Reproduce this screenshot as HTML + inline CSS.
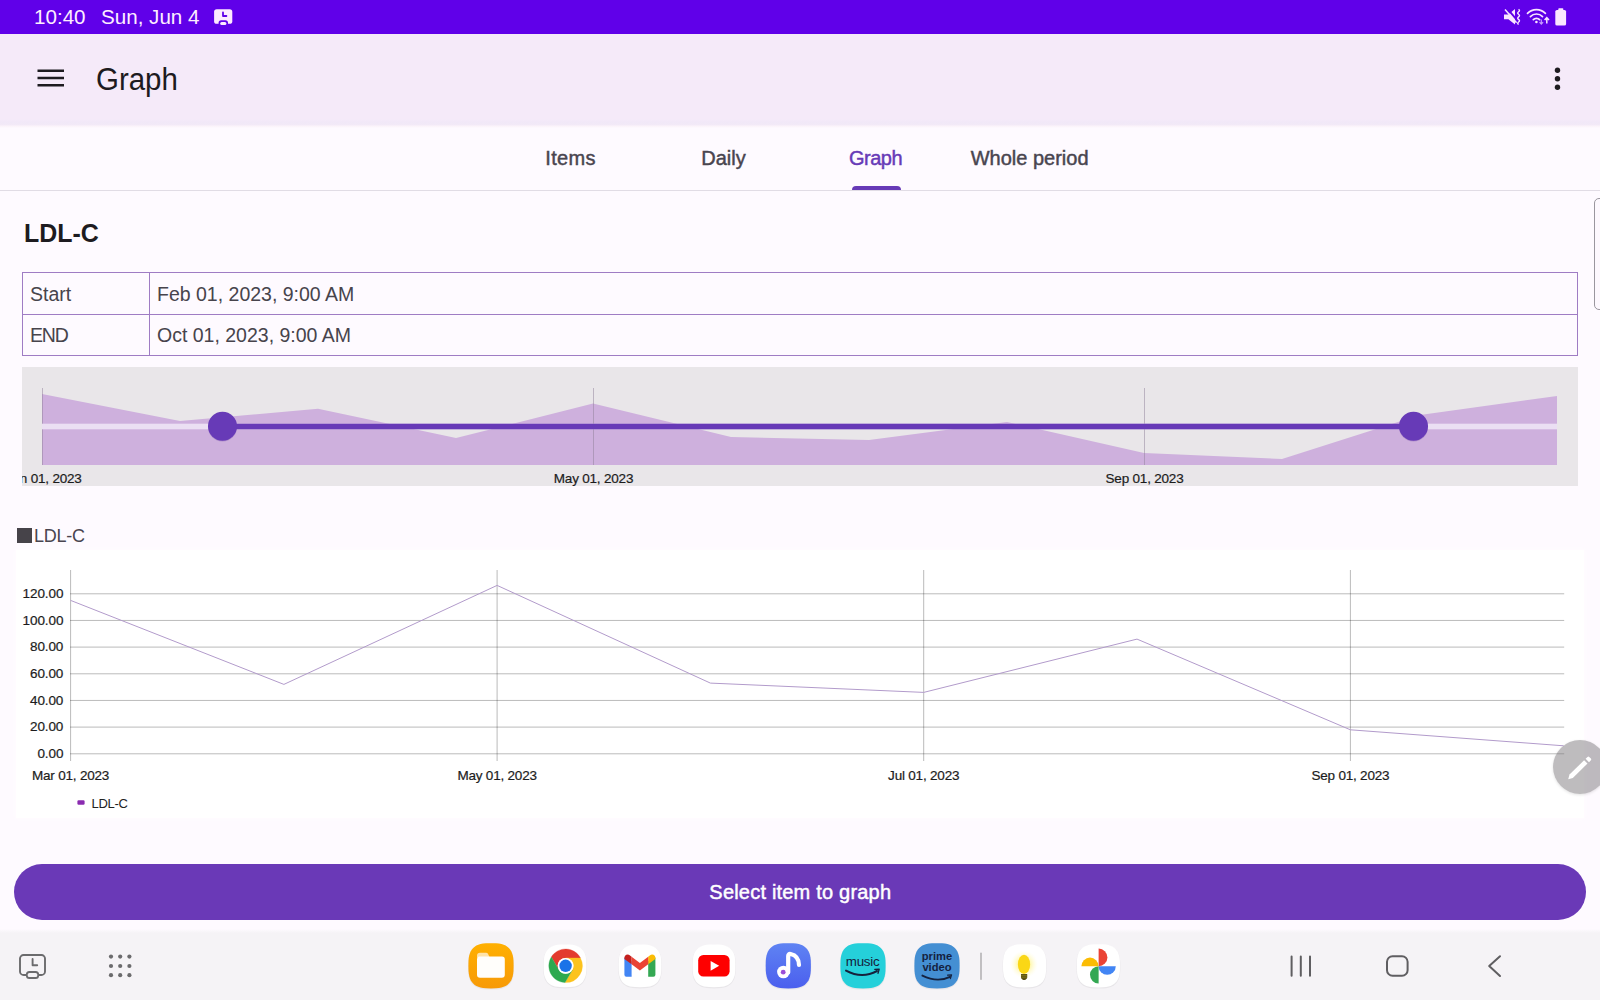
<!DOCTYPE html>
<html lang="en">
<head>
<meta charset="utf-8">
<title>Graph</title>
<style>
*{box-sizing:border-box;margin:0;padding:0}
html,body{width:1600px;height:1000px;overflow:hidden}
body{position:relative;background:#fefaff;font-family:"Liberation Sans","DejaVu Sans",sans-serif;color:#1d1b20}
.abs{position:absolute}
.t{position:absolute;white-space:nowrap;line-height:1}
.med{-webkit-text-stroke:0.45px currentColor}
#status{left:0;top:0;width:1600px;height:33.5px;background:#6000e9}
#appbar{left:0;top:33.5px;width:1600px;height:91.5px;background:#f5eaf9}
#appshadow{left:0;top:119px;width:1600px;height:9px;background:linear-gradient(#f5eaf9,#f1e8f8 35%,#f2e9f7 60%,#fbf3fa 80%,#fefaff)}
#tabline{left:0;top:190px;width:1600px;height:1px;background:#e1dce5}
.tab{font-size:20px;color:#49454f;transform:translateX(-50%);top:148px}
#ind{left:852px;top:186px;width:49px;height:4px;background:#673ab7;border-radius:4px 4px 0 0}
#tbl{left:22px;top:272px;width:1556px;height:84px;border:1px solid #9f7cc4}
#tbl .h{left:0;top:41px;width:1554px;height:1px;background:#9f7cc4}
#tbl .v{left:126px;top:0;width:1px;height:82px;background:#9f7cc4}
.cell{font-size:19.5px;color:#47444c}
#range{left:22px;top:367px;width:1556px;height:119px;background:#e9e6e9;overflow:hidden}
.xl{font-size:13.5px;letter-spacing:-0.2px;color:#1c1c1c;-webkit-text-stroke:0.2px #1c1c1c;transform:translateX(-50%)}
.yl{left:16px;width:47.3px;text-align:right;font-size:13.5px;letter-spacing:-0.1px;color:#1c1c1c;-webkit-text-stroke:0.2px #1c1c1c}
#chart{left:16px;top:550px;width:1568px;height:268px;background:#ffffff;box-shadow:0 0 3px 1px #fffcff}
#btn{left:14.3px;top:863.7px;width:1572px;height:56px;border-radius:28px;background:#6a39b7}
#btn .t{left:0;width:100%;text-align:center;top:18.6px;color:#fff;font-size:20px;letter-spacing:0.2px}
#task{left:0;top:929px;width:1600px;height:71px;background:linear-gradient(#fefaff,#f5f3f6 4px)}
</style>
</head>
<body>
<!-- status bar -->
<div id="status" class="abs">
  <div class="t" style="left:34px;top:6.5px;font-size:20.6px;color:#fdeeff">10:40</div>
  <div class="t" style="left:101px;top:6.5px;font-size:20.6px;color:#fdeeff">Sun, Jun 4</div>
  <svg class="abs" style="left:210px;top:4px" width="28" height="26" viewBox="210 4 28 26">
    <rect x="214.1" y="9.2" width="18.2" height="14.6" rx="2.6" fill="#fdeaff"/>
    <path d="M223 12.4v3.6h3.4" stroke="#6000e9" stroke-width="1.8" fill="none" stroke-linecap="round" stroke-linejoin="round"/>
    <rect x="218.6" y="20.2" width="9.4" height="6" rx="2.6" fill="#6000e9"/>
    <rect x="220.2" y="21.9" width="6.2" height="3" rx="1.5" fill="#fdeaff"/>
  </svg>
  <svg class="abs" style="left:1500px;top:4px" width="72" height="26" viewBox="1500 4 72 26">
    <path d="M1504 14.4h4.4l6.6-5.4v15.6l-6.6-5.4h-4.4z" fill="#fae6ff"/>
    <path d="M1506.6 7.8l9.6 11.4" stroke="#6000e9" stroke-width="2" fill="none"/>
    <path d="M1505 9.4l11.6 13.4" stroke="#fae6ff" stroke-width="1.5" fill="none"/>
    <path d="M1518.6 9.2q1.8 1.3 0 2.55q-1.8 1.3 0 2.55q1.8 1.3 0 2.55q-1.8 1.3 0 2.55q1.8 1.3 0 2.55q-1.8 1.3 0 2.55" stroke="#fae6ff" stroke-width="1.4" fill="none"/>
    <g fill="none" stroke="#fae6ff" stroke-width="1.7" stroke-linecap="round">
      <path d="M1527.5 13.4a12.4 12.4 0 0 1 17.9 0"/>
      <path d="M1530.4 16.6a8.3 8.3 0 0 1 12.1 0"/>
      <path d="M1533.3 19.7a4.3 4.3 0 0 1 6.3 0"/>
    </g>
    <circle cx="1536.4" cy="22" r="1.3" fill="#fae6ff"/>
    <path d="M1541.3 19.4v4.6m-1.8-1.8l1.8 1.9l1.8-1.9" stroke="#c79bff" stroke-width="1.2" fill="none"/>
    <path d="M1546.8 23.4v-5.6m-2.2 2.3l2.2-2.4l2.2 2.4" stroke="#fae6ff" stroke-width="1.5" fill="none"/>
    <rect x="1555.3" y="9.9" width="10.8" height="15.7" rx="1.7" fill="#fae6ff"/>
    <rect x="1558.3" y="8.2" width="5" height="3" rx="0.8" fill="#fae6ff"/>
  </svg>
</div>
<!-- app bar -->
<div id="appbar" class="abs">
  <svg class="abs" style="left:36px;top:34.5px" width="30" height="22" viewBox="0 0 30 22"><path d="M1.5 2.8h26.5M1.5 10.05h26.5M1.5 17.25h26.5" stroke="#1d1b20" stroke-width="2.6" fill="none"/></svg>
  <div class="t" style="left:96px;top:30.2px;font-size:31px;transform:scaleX(0.95);transform-origin:0 0;color:#1d1b20">Graph</div>
  <svg class="abs" style="left:1550px;top:31.5px" width="14" height="28" viewBox="0 0 14 28"><circle cx="7.5" cy="5.25" r="2.7" fill="#1d1b20"/><circle cx="7.5" cy="13.75" r="2.7" fill="#1d1b20"/><circle cx="7.5" cy="22.25" r="2.7" fill="#1d1b20"/></svg>
</div>
<div id="appshadow" class="abs"></div>
<!-- tabs -->
<div id="tabline" class="abs"></div>
<div class="t tab med" style="left:570.5px;letter-spacing:0.3px">Items</div>
<div class="t tab med" style="left:723.5px">Daily</div>
<div class="t tab med" style="left:875.5px;color:#673ab7;letter-spacing:-0.5px">Graph</div>
<div class="t tab med" style="left:1029.6px">Whole period</div>
<div id="ind" class="abs"></div>
<!-- right edge handle -->
<div class="abs" style="left:1593.6px;top:197.6px;width:14px;height:112px;border:1.4px solid #9a969e;border-radius:5px;background:#fdf8fe"></div>

<!-- title -->
<div class="t" style="left:24px;top:219.5px;font-size:26.5px;transform:scaleX(0.94);transform-origin:0 0;font-weight:bold;color:#1d1b20">LDL-C</div>

<!-- table -->
<div id="tbl" class="abs">
  <div class="abs h"></div><div class="abs v"></div>
  <div class="t cell" style="left:7px;top:11.5px">Start</div>
  <div class="t cell" style="left:134px;top:11.5px">Feb 01, 2023, 9:00 AM</div>
  <div class="t cell" style="left:7px;top:52.5px;letter-spacing:-1.2px">END</div>
  <div class="t cell" style="left:134px;top:52.5px">Oct 01, 2023, 9:00 AM</div>
</div>

<!-- range slider -->
<div id="range" class="abs">
  <svg class="abs" style="left:0;top:0" width="1556" height="119" viewBox="22 367 1556 119">
    <polygon points="42,394 180,421 318,408.7 456,438 593,403.5 731,437 869,440 1007,422 1144,453 1282,459 1420,415 1557,396 1557,465 42,465" fill="#ceb0dd"/>
    <path d="M42.5 388v77M593.5 388v77M1144.5 388v77" stroke="#8f7f99" stroke-opacity="0.5" stroke-width="1" fill="none"/>
    <rect x="42" y="423.7" width="1515" height="5.6" fill="#ebdff3"/>
    <rect x="222" y="423.7" width="1191" height="5.6" fill="#673ab7"/>
    <circle cx="222.5" cy="427" r="14.5" fill="#5a3596" opacity="0.25"/>
    <circle cx="1413.5" cy="427" r="14.5" fill="#5a3596" opacity="0.25"/>
    <circle cx="222.5" cy="426.3" r="14.5" fill="#673ab7"/>
    <circle cx="1413.5" cy="426.3" r="14.5" fill="#673ab7"/>
  </svg>
  <div class="t xl" style="left:21.8px;top:105px">Jan 01, 2023</div>
  <div class="t xl" style="left:571.5px;top:105px">May 01, 2023</div>
  <div class="t xl" style="left:1122.5px;top:105px">Sep 01, 2023</div>
</div>

<!-- legend top -->
<div class="abs" style="left:17px;top:528px;width:15px;height:15px;background:#464349"></div>
<div class="t" style="left:34px;top:527px;font-size:18px;letter-spacing:-0.25px;color:#49454f">LDL-C</div>

<!-- chart -->
<div id="chart" class="abs">
  <svg class="abs" style="left:0;top:0" width="1568" height="268" viewBox="16 550 1568 268">
    <g stroke="#000" stroke-opacity="0.27" stroke-width="1" fill="none">
      <path d="M70.1 593.8H1564.2M70.1 620.45H1564.2M70.1 647.1H1564.2M70.1 673.8H1564.2M70.1 700.45H1564.2M70.1 727.1H1564.2M70.1 753.8H1564.2"/>
      <path d="M70.6 570V761M497.1 570V761M923.7 570V761M1350.4 570V761"/>
    </g>
    <polyline points="70.6,600.4 283.9,684.4 497.1,585.4 710.4,683.1 923.7,692.4 1137,639.1 1350.4,729.8 1563.7,745.8" fill="none" stroke="#b29bcb" stroke-width="1"/>
    <rect x="77.4" y="800.3" width="7.2" height="4.4" rx="1.2" fill="#8a2bb0"/>
  </svg>
</div>
<div class="t yl" style="top:587px">120.00</div>
<div class="t yl" style="top:613.7px">100.00</div>
<div class="t yl" style="top:640.3px">80.00</div>
<div class="t yl" style="top:667px">60.00</div>
<div class="t yl" style="top:693.7px">40.00</div>
<div class="t yl" style="top:720.3px">20.00</div>
<div class="t yl" style="top:747px">0.00</div>
<div class="t xl" style="left:70.6px;top:768.7px">Mar 01, 2023</div>
<div class="t xl" style="left:497.1px;top:768.7px">May 01, 2023</div>
<div class="t xl" style="left:923.7px;top:768.7px">Jul 01, 2023</div>
<div class="t xl" style="left:1350.4px;top:768.7px">Sep 01, 2023</div>
<div class="t" style="left:91.5px;top:796.5px;font-size:13px;letter-spacing:-0.3px;color:#222">LDL-C</div>

<!-- fab -->
<div class="abs" id="fab" style="left:1553px;top:740.3px;width:54px;height:54px;border-radius:50%;background:rgba(122,118,122,0.49);box-shadow:0 1px 3px rgba(0,0,0,0.12)"></div>
<svg class="abs" style="left:1560px;top:750px" width="40" height="36" viewBox="1560 750 40 36">
  <path d="M1568.2 779.2l1.3-4.6l14.6-14.3l3.4 3.3l-14.7 14.4z" fill="#fff"/>
  <path d="M1585.6 758.8l1.9-1.9a1.2 1.2 0 0 1 1.7 0l1.7 1.7a1.2 1.2 0 0 1 0 1.7l-1.9 1.9z" fill="#fff"/>
</svg>

<!-- button -->
<div id="btn" class="abs"><div class="t med">Select item to graph</div></div>

<!-- taskbar -->
<div id="task" class="abs"></div>
<svg class="abs" style="left:0;top:929px" width="1600" height="71" viewBox="0 929 1600 71" font-family="'Liberation Sans',sans-serif">
<defs><linearGradient id="gF" x1="0" y1="0" x2="0" y2="1"><stop offset="0" stop-color="#ffb000"/><stop offset="1" stop-color="#f79a08"/></linearGradient><linearGradient id="gM" x1="0" y1="0" x2="0" y2="1"><stop offset="0" stop-color="#5f83f3"/><stop offset="1" stop-color="#4b5fee"/></linearGradient><radialGradient id="gB"><stop offset="0.45" stop-color="#fff27a" stop-opacity="0.6"/><stop offset="1" stop-color="#fffbd0" stop-opacity="0"/></radialGradient></defs>
<g fill="none" stroke="#6b6b6d" stroke-width="1.9">
<rect x="20" y="955" width="25" height="20" rx="3.6"/>
<path d="M32.6 959v6.2h4.6" stroke-linecap="round" stroke-linejoin="round"/>
</g>
<rect x="26.8" y="972" width="11.4" height="6" rx="2.6" fill="#f5f3f6" stroke="#6b6b6d" stroke-width="1.8"/>
<circle cx="111" cy="956.6" r="2.1" fill="#6b6b6d"/>
<circle cx="120.2" cy="956.6" r="2.1" fill="#6b6b6d"/>
<circle cx="129.4" cy="956.6" r="2.1" fill="#6b6b6d"/>
<circle cx="111" cy="966" r="2.1" fill="#6b6b6d"/>
<circle cx="120.2" cy="966" r="2.1" fill="#6b6b6d"/>
<circle cx="129.4" cy="966" r="2.1" fill="#6b6b6d"/>
<circle cx="111" cy="975.2" r="2.1" fill="#6b6b6d"/>
<circle cx="120.2" cy="975.2" r="2.1" fill="#6b6b6d"/>
<circle cx="129.4" cy="975.2" r="2.1" fill="#6b6b6d"/>
<path d="M514.0,966.6 513.9,971.7 513.6,974.8 513.1,977.3 512.4,979.5 511.5,981.5 510.4,983.2 509.1,984.7 507.6,986.0 505.9,987.1 503.9,988.0 501.7,988.7 499.2,989.2 496.1,989.5 491.0,989.6 485.9,989.5 482.8,989.2 480.3,988.7 478.1,988.0 476.1,987.1 474.4,986.0 472.9,984.7 471.6,983.2 470.5,981.5 469.6,979.5 468.9,977.3 468.4,974.8 468.1,971.7 468.0,966.6 468.1,961.5 468.4,958.4 468.9,955.9 469.6,953.7 470.5,951.7 471.6,950.0 472.9,948.5 474.4,947.2 476.1,946.1 478.1,945.2 480.3,944.5 482.8,944.0 485.9,943.7 491.0,943.6 496.1,943.7 499.2,944.0 501.7,944.5 503.9,945.2 505.9,946.1 507.6,947.2 509.1,948.5 510.4,950.0 511.5,951.7 512.4,953.7 513.1,955.9 513.6,958.4 513.9,961.5z" fill="#000" opacity="0.05"/>
<path d="M513.6,965.8 513.5,970.8 513.2,973.8 512.7,976.3 512.0,978.5 511.2,980.4 510.1,982.1 508.8,983.6 507.3,984.9 505.6,986.0 503.7,986.8 501.5,987.5 499.0,988.0 496.0,988.3 491.0,988.4 486.0,988.3 483.0,988.0 480.5,987.5 478.3,986.8 476.4,986.0 474.7,984.9 473.2,983.6 471.9,982.1 470.8,980.4 470.0,978.5 469.3,976.3 468.8,973.8 468.5,970.8 468.4,965.8 468.5,960.8 468.8,957.8 469.3,955.3 470.0,953.1 470.8,951.2 471.9,949.5 473.2,948.0 474.7,946.7 476.4,945.6 478.3,944.8 480.5,944.1 483.0,943.6 486.0,943.3 491.0,943.2 496.0,943.3 499.0,943.6 501.5,944.1 503.7,944.8 505.6,945.6 507.3,946.7 508.8,948.0 510.1,949.5 511.2,951.2 512.0,953.1 512.7,955.3 513.2,957.8 513.5,960.8z" fill="url(#gF)"/>
<path d="M477 957.6v-1.8a3 3 0 0 1 3-3h6a2.4 2.4 0 0 1 2.1 1.2l1.6 3.6z" fill="#ffe3a8"/>
<path d="M477 959a2.4 2.4 0 0 1 2.4-2.4h22.6a2.8 2.8 0 0 1 2.8 2.8v15.4a3 3 0 0 1-3 3h-21.8a3 3 0 0 1-3-3z" fill="#fffefb"/>
<path d="M586.8,966.6 586.7,971.4 586.4,974.3 585.9,976.8 585.3,978.9 584.4,980.7 583.4,982.3 582.2,983.8 580.7,985.0 579.1,986.0 577.3,986.9 575.2,987.5 572.7,988.0 569.8,988.3 565.0,988.4 560.2,988.3 557.3,988.0 554.8,987.5 552.7,986.9 550.9,986.0 549.3,985.0 547.8,983.8 546.6,982.3 545.6,980.7 544.7,978.9 544.1,976.8 543.6,974.3 543.3,971.4 543.2,966.6 543.3,961.8 543.6,958.9 544.1,956.4 544.7,954.3 545.6,952.5 546.6,950.9 547.8,949.4 549.3,948.2 550.9,947.2 552.7,946.3 554.8,945.7 557.3,945.2 560.2,944.9 565.0,944.8 569.8,944.9 572.7,945.2 575.2,945.7 577.3,946.3 579.1,947.2 580.7,948.2 582.2,949.4 583.4,950.9 584.4,952.5 585.3,954.3 585.9,956.4 586.4,958.9 586.7,961.8z" fill="#000" opacity="0.05"/>
<path d="M586.4,965.8 586.3,970.5 586.0,973.4 585.6,975.8 584.9,977.8 584.1,979.6 583.1,981.2 581.9,982.7 580.4,983.9 578.8,984.9 577.0,985.7 575.0,986.4 572.6,986.8 569.7,987.1 565.0,987.2 560.3,987.1 557.4,986.8 555.0,986.4 553.0,985.7 551.2,984.9 549.6,983.9 548.1,982.7 546.9,981.2 545.9,979.6 545.1,977.8 544.4,975.8 544.0,973.4 543.7,970.5 543.6,965.8 543.7,961.1 544.0,958.2 544.4,955.8 545.1,953.8 545.9,952.0 546.9,950.4 548.1,948.9 549.6,947.7 551.2,946.7 553.0,945.9 555.0,945.2 557.4,944.8 560.3,944.5 565.0,944.4 569.7,944.5 572.6,944.8 575.0,945.2 577.0,945.9 578.8,946.7 580.4,947.7 581.9,948.9 583.1,950.4 584.1,952.0 584.9,953.8 585.6,955.8 586.0,958.2 586.3,961.1z" fill="#ffffff"/>
<path d="M565.60 957.90L580.43 957.90A16.8 16.8 0 0 0 551.35 956.91L558.76 969.75A7.9 7.9 0 0 1 565.60 957.90z" fill="#e33b2e" stroke="#e33b2e" stroke-width="0.3"/>
<path d="M572.44 969.75L565.03 982.59A16.8 16.8 0 0 0 580.43 957.90L565.60 957.90A7.9 7.9 0 0 1 572.44 969.75z" fill="#fcc31e" stroke="#fcc31e" stroke-width="0.3"/>
<path d="M558.76 969.75L551.35 956.91A16.8 16.8 0 0 0 565.03 982.59L572.44 969.75A7.9 7.9 0 0 1 558.76 969.75z" fill="#2da94f" stroke="#2da94f" stroke-width="0.3"/>
<circle cx="565.6" cy="965.8" r="7.9" fill="#fff"/><circle cx="565.6" cy="965.8" r="6.2" fill="#1a73e8"/>
<path d="M661.8,966.6 661.7,971.4 661.4,974.3 660.9,976.8 660.3,978.9 659.4,980.7 658.4,982.3 657.2,983.8 655.7,985.0 654.1,986.0 652.3,986.9 650.2,987.5 647.7,988.0 644.8,988.3 640.0,988.4 635.2,988.3 632.3,988.0 629.8,987.5 627.7,986.9 625.9,986.0 624.3,985.0 622.8,983.8 621.6,982.3 620.6,980.7 619.7,978.9 619.1,976.8 618.6,974.3 618.3,971.4 618.2,966.6 618.3,961.8 618.6,958.9 619.1,956.4 619.7,954.3 620.6,952.5 621.6,950.9 622.8,949.4 624.3,948.2 625.9,947.2 627.7,946.3 629.8,945.7 632.3,945.2 635.2,944.9 640.0,944.8 644.8,944.9 647.7,945.2 650.2,945.7 652.3,946.3 654.1,947.2 655.7,948.2 657.2,949.4 658.4,950.9 659.4,952.5 660.3,954.3 660.9,956.4 661.4,958.9 661.7,961.8z" fill="#000" opacity="0.05"/>
<path d="M661.4,965.8 661.3,970.5 661.0,973.4 660.6,975.8 659.9,977.8 659.1,979.6 658.1,981.2 656.9,982.7 655.4,983.9 653.8,984.9 652.0,985.7 650.0,986.4 647.6,986.8 644.7,987.1 640.0,987.2 635.3,987.1 632.4,986.8 630.0,986.4 628.0,985.7 626.2,984.9 624.6,983.9 623.1,982.7 621.9,981.2 620.9,979.6 620.1,977.8 619.4,975.8 619.0,973.4 618.7,970.5 618.6,965.8 618.7,961.1 619.0,958.2 619.4,955.8 620.1,953.8 620.9,952.0 621.9,950.4 623.1,948.9 624.6,947.7 626.2,946.7 628.0,945.9 630.0,945.2 632.4,944.8 635.3,944.5 640.0,944.4 644.7,944.5 647.6,944.8 650.0,945.2 652.0,945.9 653.8,946.7 655.4,947.7 656.9,948.9 658.1,950.4 659.1,952.0 659.9,953.8 660.6,955.8 661.0,958.2 661.3,961.1z" fill="#ffffff"/>
<path d="M624.4 957.4v17.4a2 2 0 0 0 2 2h5.2v-15.6z" fill="#4285f4"/>
<path d="M655.4 957.4v17.4a2 2 0 0 1-2 2h-5.2v-15.6z" fill="#34a853"/>
<path d="M624.4 957.8a3.3 3.3 0 0 1 5.3-2.6l1.9 1.5v7.6l-7.2-5.4z" fill="#c5221f"/>
<path d="M655.4 957.8a3.3 3.3 0 0 0-5.3-2.6l-1.9 1.5v7.6l7.2-5.4z" fill="#fbbc04"/>
<path d="M631.6 956.7l8.3 6.3l8.3-6.3v7.6l-8.3 6.3l-8.3-6.3z" fill="#ea4335"/>
<path d="M735.8,966.6 735.7,971.4 735.4,974.3 734.9,976.8 734.3,978.9 733.4,980.7 732.4,982.3 731.2,983.8 729.7,985.0 728.1,986.0 726.3,986.9 724.2,987.5 721.7,988.0 718.8,988.3 714.0,988.4 709.2,988.3 706.3,988.0 703.8,987.5 701.7,986.9 699.9,986.0 698.3,985.0 696.8,983.8 695.6,982.3 694.6,980.7 693.7,978.9 693.1,976.8 692.6,974.3 692.3,971.4 692.2,966.6 692.3,961.8 692.6,958.9 693.1,956.4 693.7,954.3 694.6,952.5 695.6,950.9 696.8,949.4 698.3,948.2 699.9,947.2 701.7,946.3 703.8,945.7 706.3,945.2 709.2,944.9 714.0,944.8 718.8,944.9 721.7,945.2 724.2,945.7 726.3,946.3 728.1,947.2 729.7,948.2 731.2,949.4 732.4,950.9 733.4,952.5 734.3,954.3 734.9,956.4 735.4,958.9 735.7,961.8z" fill="#000" opacity="0.05"/>
<path d="M735.4,965.8 735.3,970.5 735.0,973.4 734.6,975.8 733.9,977.8 733.1,979.6 732.1,981.2 730.9,982.7 729.4,983.9 727.8,984.9 726.0,985.7 724.0,986.4 721.6,986.8 718.7,987.1 714.0,987.2 709.3,987.1 706.4,986.8 704.0,986.4 702.0,985.7 700.2,984.9 698.6,983.9 697.1,982.7 695.9,981.2 694.9,979.6 694.1,977.8 693.4,975.8 693.0,973.4 692.7,970.5 692.6,965.8 692.7,961.1 693.0,958.2 693.4,955.8 694.1,953.8 694.9,952.0 695.9,950.4 697.1,948.9 698.6,947.7 700.2,946.7 702.0,945.9 704.0,945.2 706.4,944.8 709.3,944.5 714.0,944.4 718.7,944.5 721.6,944.8 724.0,945.2 726.0,945.9 727.8,946.7 729.4,947.7 730.9,948.9 732.1,950.4 733.1,952.0 733.9,953.8 734.6,955.8 735.0,958.2 735.3,961.1z" fill="#ffffff"/>
<rect x="698.2" y="955" width="31.4" height="21.4" rx="5.2" fill="#fe0000"/>
<path d="M710.6 960.9v9.8l8.6-4.9z" fill="#fff"/>
<path d="M811.3,966.6 811.2,971.7 810.9,974.8 810.4,977.3 809.7,979.5 808.8,981.5 807.7,983.2 806.4,984.7 804.9,986.0 803.2,987.1 801.2,988.0 799.0,988.7 796.5,989.2 793.4,989.5 788.3,989.6 783.2,989.5 780.1,989.2 777.6,988.7 775.4,988.0 773.4,987.1 771.7,986.0 770.2,984.7 768.9,983.2 767.8,981.5 766.9,979.5 766.2,977.3 765.7,974.8 765.4,971.7 765.3,966.6 765.4,961.5 765.7,958.4 766.2,955.9 766.9,953.7 767.8,951.7 768.9,950.0 770.2,948.5 771.7,947.2 773.4,946.1 775.4,945.2 777.6,944.5 780.1,944.0 783.2,943.7 788.3,943.6 793.4,943.7 796.5,944.0 799.0,944.5 801.2,945.2 803.2,946.1 804.9,947.2 806.4,948.5 807.7,950.0 808.8,951.7 809.7,953.7 810.4,955.9 810.9,958.4 811.2,961.5z" fill="#000" opacity="0.05"/>
<path d="M810.9,965.8 810.8,970.8 810.5,973.8 810.0,976.3 809.3,978.5 808.5,980.4 807.4,982.1 806.1,983.6 804.6,984.9 802.9,986.0 801.0,986.8 798.8,987.5 796.3,988.0 793.3,988.3 788.3,988.4 783.3,988.3 780.3,988.0 777.8,987.5 775.6,986.8 773.7,986.0 772.0,984.9 770.5,983.6 769.2,982.1 768.1,980.4 767.3,978.5 766.6,976.3 766.1,973.8 765.8,970.8 765.7,965.8 765.8,960.8 766.1,957.8 766.6,955.3 767.3,953.1 768.1,951.2 769.2,949.5 770.5,948.0 772.0,946.7 773.7,945.6 775.6,944.8 777.8,944.1 780.3,943.6 783.3,943.3 788.3,943.2 793.3,943.3 796.3,943.6 798.8,944.1 801.0,944.8 802.9,945.6 804.6,946.7 806.1,948.0 807.4,949.5 808.5,951.2 809.3,953.1 810.0,955.3 810.5,957.8 810.8,960.8z" fill="url(#gM)"/>
<circle cx="783.4" cy="972" r="6.3" fill="#fff"/><circle cx="783.2" cy="972.2" r="2.4" fill="#9a4fd8"/>
<path d="M788.2 972.4v-16.4q0-2.4 2.4-2q8.2 1.8 8.4 11" fill="none" stroke="#fff" stroke-width="4.2" stroke-linecap="round"/>
<path d="M886.0,966.6 885.9,971.7 885.6,974.8 885.1,977.3 884.4,979.5 883.5,981.5 882.4,983.2 881.1,984.7 879.6,986.0 877.9,987.1 875.9,988.0 873.7,988.7 871.2,989.2 868.1,989.5 863.0,989.6 857.9,989.5 854.8,989.2 852.3,988.7 850.1,988.0 848.1,987.1 846.4,986.0 844.9,984.7 843.6,983.2 842.5,981.5 841.6,979.5 840.9,977.3 840.4,974.8 840.1,971.7 840.0,966.6 840.1,961.5 840.4,958.4 840.9,955.9 841.6,953.7 842.5,951.7 843.6,950.0 844.9,948.5 846.4,947.2 848.1,946.1 850.1,945.2 852.3,944.5 854.8,944.0 857.9,943.7 863.0,943.6 868.1,943.7 871.2,944.0 873.7,944.5 875.9,945.2 877.9,946.1 879.6,947.2 881.1,948.5 882.4,950.0 883.5,951.7 884.4,953.7 885.1,955.9 885.6,958.4 885.9,961.5z" fill="#000" opacity="0.05"/>
<path d="M885.6,965.8 885.5,970.8 885.2,973.8 884.7,976.3 884.0,978.5 883.2,980.4 882.1,982.1 880.8,983.6 879.3,984.9 877.6,986.0 875.7,986.8 873.5,987.5 871.0,988.0 868.0,988.3 863.0,988.4 858.0,988.3 855.0,988.0 852.5,987.5 850.3,986.8 848.4,986.0 846.7,984.9 845.2,983.6 843.9,982.1 842.8,980.4 842.0,978.5 841.3,976.3 840.8,973.8 840.5,970.8 840.4,965.8 840.5,960.8 840.8,957.8 841.3,955.3 842.0,953.1 842.8,951.2 843.9,949.5 845.2,948.0 846.7,946.7 848.4,945.6 850.3,944.8 852.5,944.1 855.0,943.6 858.0,943.3 863.0,943.2 868.0,943.3 871.0,943.6 873.5,944.1 875.7,944.8 877.6,945.6 879.3,946.7 880.8,948.0 882.1,949.5 883.2,951.2 884.0,953.1 884.7,955.3 885.2,957.8 885.5,960.8z" fill="#25d0da"/>
<text x="862.6" y="965.6" font-size="13.4" text-anchor="middle" fill="#16213c" letter-spacing="-0.3" >music</text>
<path d="M846 970.6q16 8.6 31 0.4" fill="none" stroke="#16213c" stroke-width="2" stroke-linecap="round"/>
<path d="M874.8 969.4l4.4-0.3l-1.2 4.2" fill="none" stroke="#16213c" stroke-width="1.3" stroke-linecap="round" stroke-linejoin="round"/>
<path d="M960.0,966.6 959.9,971.7 959.6,974.8 959.1,977.3 958.4,979.5 957.5,981.5 956.4,983.2 955.1,984.7 953.6,986.0 951.9,987.1 949.9,988.0 947.7,988.7 945.2,989.2 942.1,989.5 937.0,989.6 931.9,989.5 928.8,989.2 926.3,988.7 924.1,988.0 922.1,987.1 920.4,986.0 918.9,984.7 917.6,983.2 916.5,981.5 915.6,979.5 914.9,977.3 914.4,974.8 914.1,971.7 914.0,966.6 914.1,961.5 914.4,958.4 914.9,955.9 915.6,953.7 916.5,951.7 917.6,950.0 918.9,948.5 920.4,947.2 922.1,946.1 924.1,945.2 926.3,944.5 928.8,944.0 931.9,943.7 937.0,943.6 942.1,943.7 945.2,944.0 947.7,944.5 949.9,945.2 951.9,946.1 953.6,947.2 955.1,948.5 956.4,950.0 957.5,951.7 958.4,953.7 959.1,955.9 959.6,958.4 959.9,961.5z" fill="#000" opacity="0.05"/>
<path d="M959.6,965.8 959.5,970.8 959.2,973.8 958.7,976.3 958.0,978.5 957.2,980.4 956.1,982.1 954.8,983.6 953.3,984.9 951.6,986.0 949.7,986.8 947.5,987.5 945.0,988.0 942.0,988.3 937.0,988.4 932.0,988.3 929.0,988.0 926.5,987.5 924.3,986.8 922.4,986.0 920.7,984.9 919.2,983.6 917.9,982.1 916.8,980.4 916.0,978.5 915.3,976.3 914.8,973.8 914.5,970.8 914.4,965.8 914.5,960.8 914.8,957.8 915.3,955.3 916.0,953.1 916.8,951.2 917.9,949.5 919.2,948.0 920.7,946.7 922.4,945.6 924.3,944.8 926.5,944.1 929.0,943.6 932.0,943.3 937.0,943.2 942.0,943.3 945.0,943.6 947.5,944.1 949.7,944.8 951.6,945.6 953.3,946.7 954.8,948.0 956.1,949.5 957.2,951.2 958.0,953.1 958.7,955.3 959.2,957.8 959.5,960.8z" fill="#448fd3"/>
<text x="937" y="960" font-size="11.2" font-weight="bold" text-anchor="middle" fill="#15223f">prime</text>
<text x="937" y="970.8" font-size="11.2" font-weight="bold" text-anchor="middle" fill="#15223f">video</text>
<path d="M922.4 975.6q15 7.4 27.6 1.2" fill="none" stroke="#15223f" stroke-width="1.9" stroke-linecap="round"/>
<path d="M947.6 975.2l4-0.4l-1.2 3.8" fill="none" stroke="#15223f" stroke-width="1.2" stroke-linecap="round" stroke-linejoin="round"/>
<rect x="980.2" y="952.6" width="1.6" height="27.4" rx="0.8" fill="#b4b2b5"/>
<path d="M1046.6,966.6 1046.5,971.5 1046.2,974.4 1045.7,976.8 1045.1,979.0 1044.2,980.8 1043.2,982.5 1041.9,983.9 1040.5,985.2 1038.8,986.2 1037.0,987.1 1034.8,987.7 1032.4,988.2 1029.5,988.5 1024.6,988.6 1019.7,988.5 1016.8,988.2 1014.4,987.7 1012.2,987.1 1010.4,986.2 1008.7,985.2 1007.3,983.9 1006.0,982.5 1005.0,980.8 1004.1,979.0 1003.5,976.8 1003.0,974.4 1002.7,971.5 1002.6,966.6 1002.7,961.7 1003.0,958.8 1003.5,956.4 1004.1,954.2 1005.0,952.4 1006.0,950.7 1007.3,949.3 1008.7,948.0 1010.4,947.0 1012.2,946.1 1014.4,945.5 1016.8,945.0 1019.7,944.7 1024.6,944.6 1029.5,944.7 1032.4,945.0 1034.8,945.5 1037.0,946.1 1038.8,947.0 1040.5,948.0 1041.9,949.3 1043.2,950.7 1044.2,952.4 1045.1,954.2 1045.7,956.4 1046.2,958.8 1046.5,961.7z" fill="#000" opacity="0.05"/>
<path d="M1046.2,965.8 1046.1,970.6 1045.8,973.5 1045.4,975.9 1044.7,977.9 1043.9,979.8 1042.8,981.4 1041.6,982.8 1040.2,984.0 1038.6,985.1 1036.7,985.9 1034.7,986.6 1032.3,987.0 1029.4,987.3 1024.6,987.4 1019.8,987.3 1016.9,987.0 1014.5,986.6 1012.5,985.9 1010.6,985.1 1009.0,984.0 1007.6,982.8 1006.4,981.4 1005.3,979.8 1004.5,977.9 1003.8,975.9 1003.4,973.5 1003.1,970.6 1003.0,965.8 1003.1,961.0 1003.4,958.1 1003.8,955.7 1004.5,953.7 1005.3,951.8 1006.4,950.2 1007.6,948.8 1009.0,947.6 1010.6,946.5 1012.5,945.7 1014.5,945.0 1016.9,944.6 1019.8,944.3 1024.6,944.2 1029.4,944.3 1032.3,944.6 1034.7,945.0 1036.7,945.7 1038.6,946.5 1040.2,947.6 1041.6,948.8 1042.8,950.2 1043.9,951.8 1044.7,953.7 1045.4,955.7 1045.8,958.1 1046.1,961.0z" fill="#ffffff"/>
<circle cx="1024" cy="964.4" r="14" fill="url(#gB)"/>
<ellipse cx="1024" cy="964.4" rx="6.1" ry="9.7" fill="#fad716"/>
<path d="M1021 974h6.2v3.6q0 1.2-1.2 1.6l-0.8 0.9h-2.2l-0.8-0.9q-1.2-0.4-1.2-1.6z" fill="#5a5216"/>
<path d="M1021 975.6h6.2M1021 977.2h6.2" stroke="#9b8c1c" stroke-width="0.5"/>
<path d="M1120.4,966.6 1120.3,971.5 1120.0,974.4 1119.5,976.8 1118.9,979.0 1118.0,980.8 1117.0,982.5 1115.7,983.9 1114.3,985.2 1112.6,986.2 1110.8,987.1 1108.6,987.7 1106.2,988.2 1103.3,988.5 1098.4,988.6 1093.5,988.5 1090.6,988.2 1088.2,987.7 1086.0,987.1 1084.2,986.2 1082.5,985.2 1081.1,983.9 1079.8,982.5 1078.8,980.8 1077.9,979.0 1077.3,976.8 1076.8,974.4 1076.5,971.5 1076.4,966.6 1076.5,961.7 1076.8,958.8 1077.3,956.4 1077.9,954.2 1078.8,952.4 1079.8,950.7 1081.1,949.3 1082.5,948.0 1084.2,947.0 1086.0,946.1 1088.2,945.5 1090.6,945.0 1093.5,944.7 1098.4,944.6 1103.3,944.7 1106.2,945.0 1108.6,945.5 1110.8,946.1 1112.6,947.0 1114.3,948.0 1115.7,949.3 1117.0,950.7 1118.0,952.4 1118.9,954.2 1119.5,956.4 1120.0,958.8 1120.3,961.7z" fill="#000" opacity="0.05"/>
<path d="M1120.0,965.8 1119.9,970.6 1119.6,973.5 1119.2,975.9 1118.5,977.9 1117.7,979.8 1116.6,981.4 1115.4,982.8 1114.0,984.0 1112.4,985.1 1110.5,985.9 1108.5,986.6 1106.1,987.0 1103.2,987.3 1098.4,987.4 1093.6,987.3 1090.7,987.0 1088.3,986.6 1086.3,985.9 1084.4,985.1 1082.8,984.0 1081.4,982.8 1080.2,981.4 1079.1,979.8 1078.3,977.9 1077.6,975.9 1077.2,973.5 1076.9,970.6 1076.8,965.8 1076.9,961.0 1077.2,958.1 1077.6,955.7 1078.3,953.7 1079.1,951.8 1080.2,950.2 1081.4,948.8 1082.8,947.6 1084.4,946.5 1086.3,945.7 1088.3,945.0 1090.7,944.6 1093.6,944.3 1098.4,944.2 1103.2,944.3 1106.1,944.6 1108.5,945.0 1110.5,945.7 1112.4,946.5 1114.0,947.6 1115.4,948.8 1116.6,950.2 1117.7,951.8 1118.5,953.7 1119.2,955.7 1119.6,958.1 1119.9,961.0z" fill="#ffffff"/>
<path d="M1098.6 948.6a8.8 8.8 0 0 1 0 17.6z" fill="#ea4335"/>
<path d="M1115.8 966.2a8.6 8.6 0 0 1-17.2 0z" fill="#4285f4"/>
<path d="M1098.6 983.4000000000001a8.6 8.6 0 0 1 0-17.2z" fill="#34a853"/>
<path d="M1081.3999999999999 966.2a8.6 8.6 0 0 1 17.2 0z" fill="#fbbc04"/>
<g fill="none" stroke="#5f5e61" stroke-width="2" stroke-linecap="round">
<path d="M1291.6 956.4v19.4M1300.8 956.4v19.4M1310 956.4v19.4"/>
<rect x="1387" y="956.2" width="20.6" height="19.6" rx="5.6"/>
<path d="M1500 956.2l-10.8 9.8l10.8 10" stroke-linejoin="round"/>
</g>
</svg>
</body>
</html>
